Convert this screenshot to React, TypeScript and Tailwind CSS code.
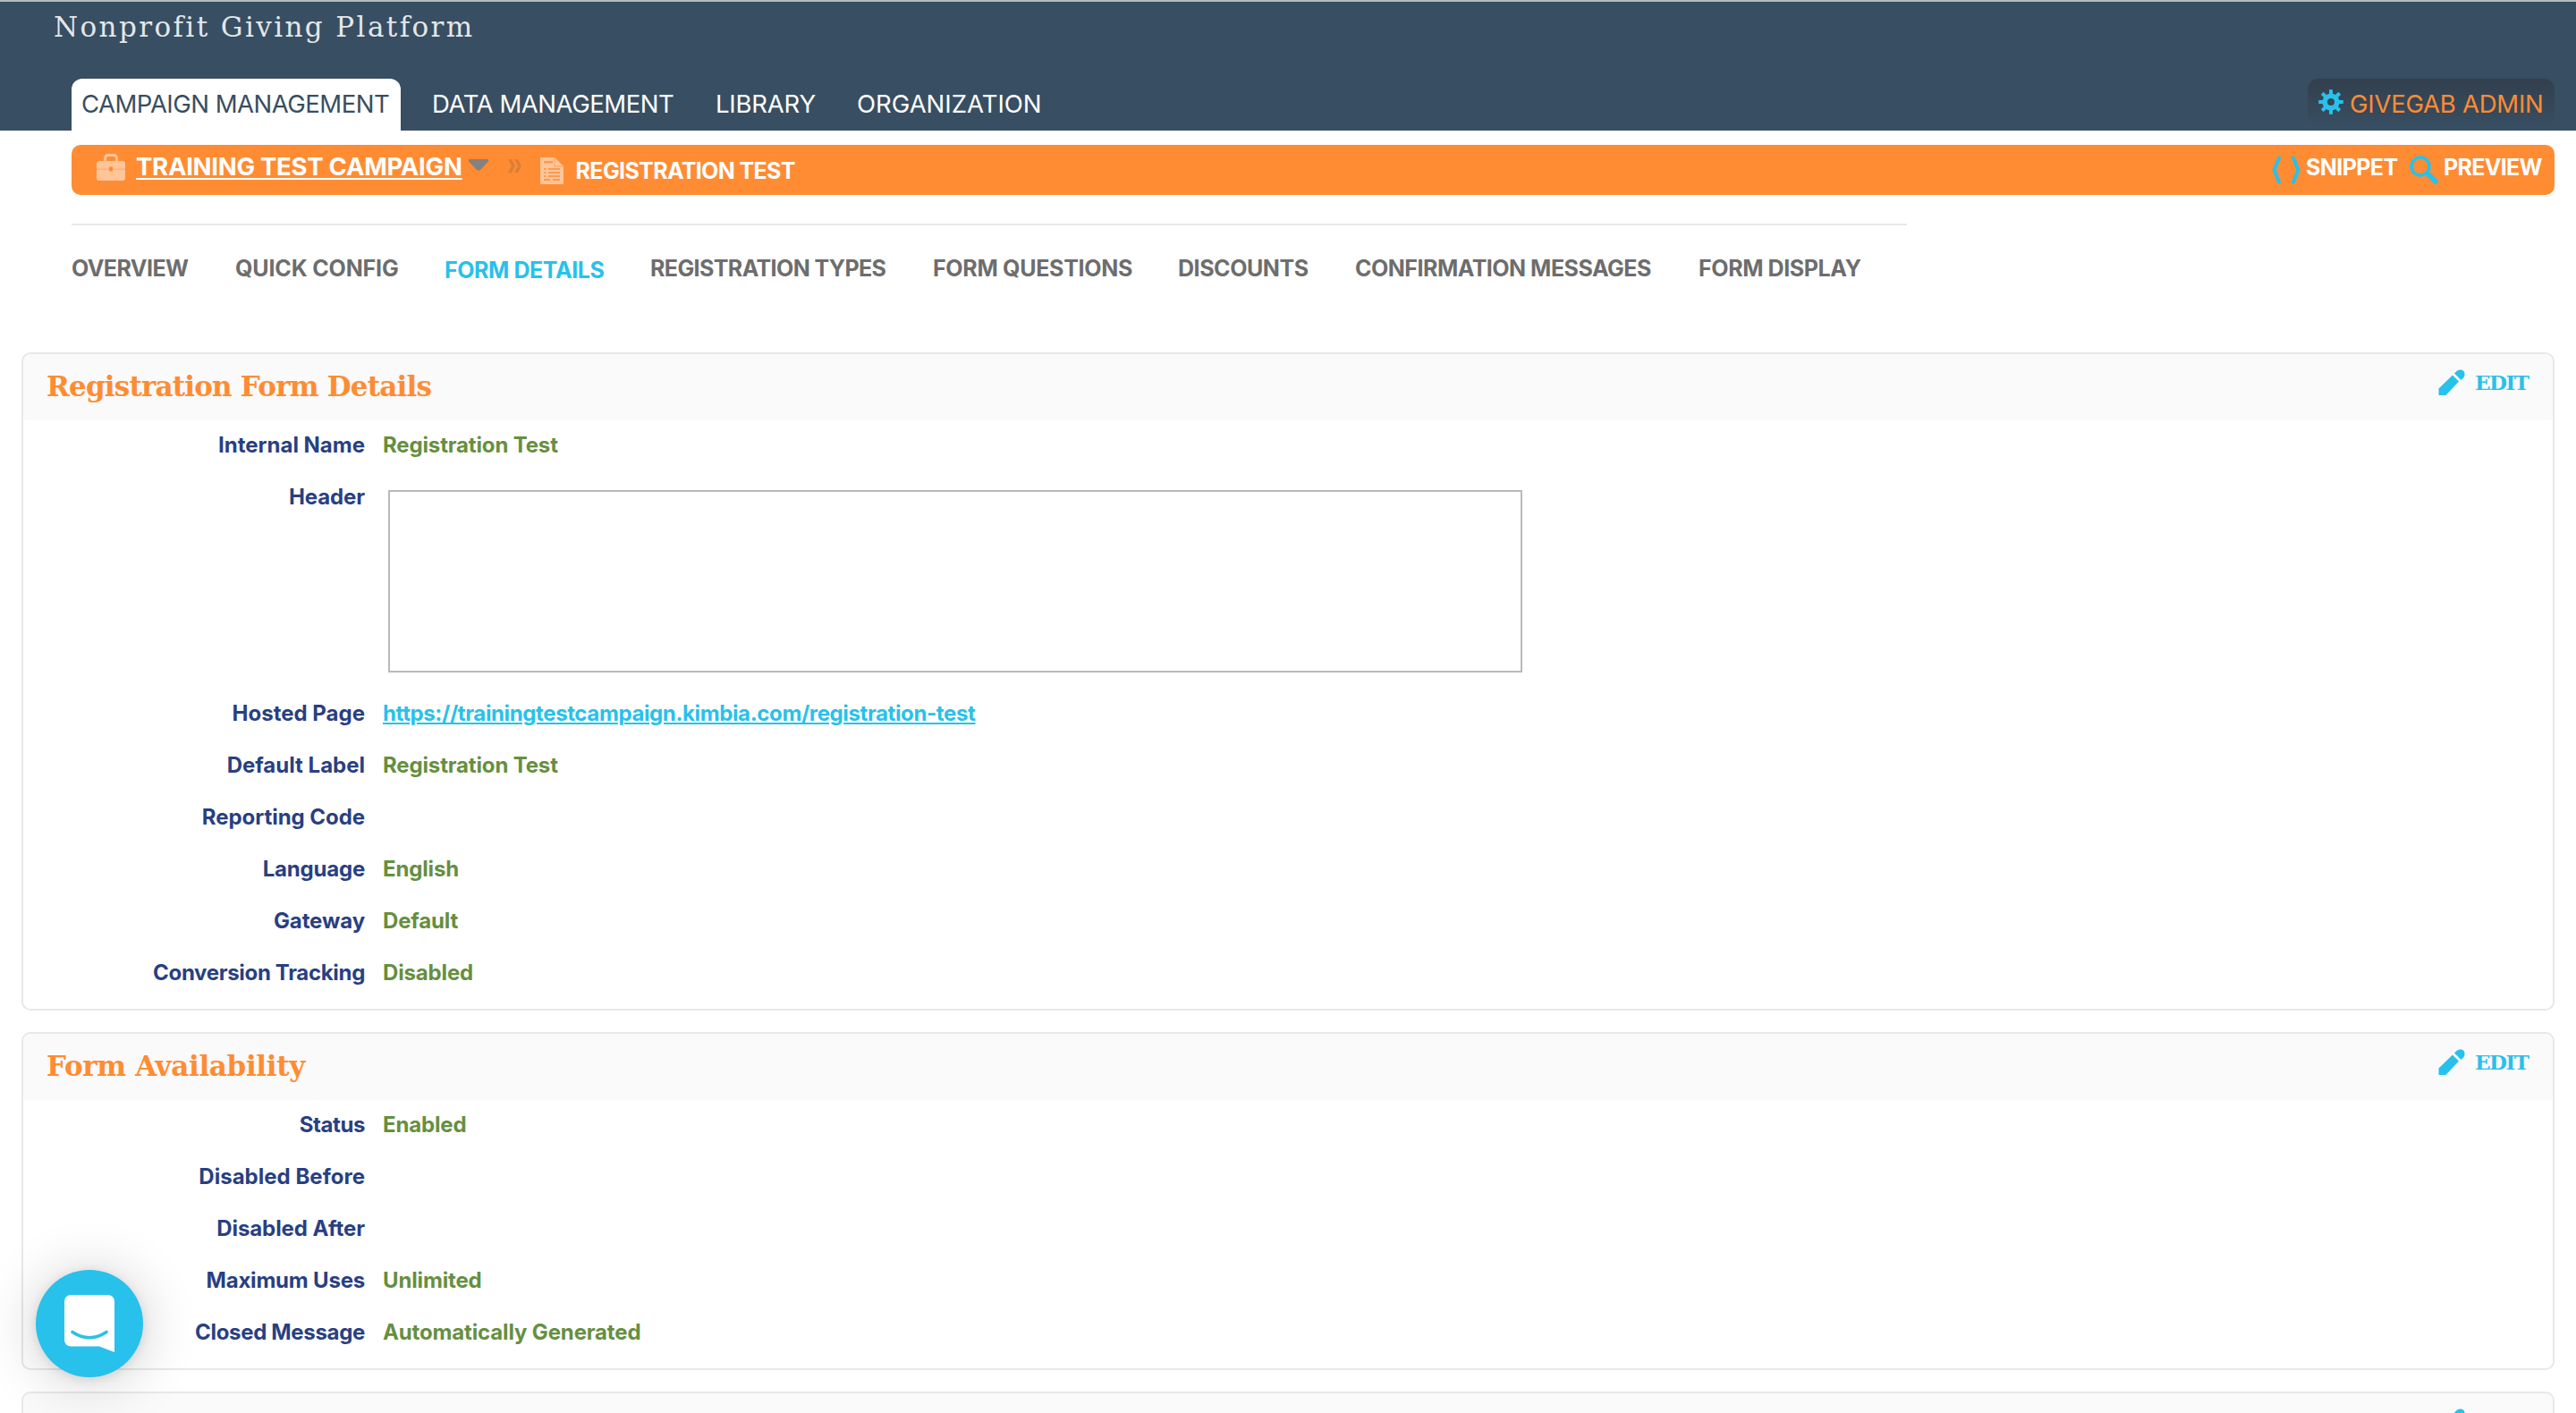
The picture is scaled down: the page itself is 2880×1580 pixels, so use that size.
import React from 'react';

type Row = { label: string; value?: string; labelCls?: string; box?: boolean; link?: boolean };

const NAV = [
  { label: 'OVERVIEW', cls: 'w-[183px] tracking-[-0.55px]' },
  { label: 'QUICK CONFIG', cls: 'w-[234px] tracking-[-0.15px]' },
  { label: 'FORM DETAILS', cls: 'w-[230px] tracking-[-0.42px] pt-[2px] text-[#28c1eb]' },
  { label: 'REGISTRATION TYPES', cls: 'w-[316px] tracking-[-0.6px]' },
  { label: 'FORM QUESTIONS', cls: 'w-[274px] tracking-[-0.3px]' },
  { label: 'DISCOUNTS', cls: 'w-[198px] tracking-[-0.45px]' },
  { label: 'CONFIRMATION MESSAGES', cls: 'w-[384px] tracking-[-0.5px]' },
  { label: 'FORM DISPLAY', cls: 'tracking-[-0.4px]' },
];

const DETAILS: Row[] = [
  { label: 'Internal Name', value: 'Registration Test', labelCls: 'tracking-[0px]' },
  { label: 'Header', box: true, labelCls: 'tracking-[-0.1px]' },
  {
    label: 'Hosted Page',
    value: 'https://trainingtestcampaign.kimbia.com/registration-test',
    link: true,
    labelCls: 'tracking-[0px]',
  },
  { label: 'Default Label', value: 'Registration Test', labelCls: 'tracking-[0px]' },
  { label: 'Reporting Code', labelCls: 'tracking-[-0.05px]' },
  { label: 'Language', value: 'English' },
  { label: 'Gateway', value: 'Default', labelCls: 'tracking-[-0.1px]' },
  { label: 'Conversion Tracking', value: 'Disabled', labelCls: 'tracking-[-0.32px]' },
];

const AVAILABILITY: Row[] = [
  { label: 'Status', value: 'Enabled', labelCls: 'tracking-[-0.4px]' },
  { label: 'Disabled Before', labelCls: 'tracking-[0.02px]' },
  { label: 'Disabled After', labelCls: 'tracking-[-0.08px]' },
  { label: 'Maximum Uses', value: 'Unlimited' },
  { label: 'Closed Message', value: 'Automatically Generated', labelCls: 'tracking-[-0.32px]' },
];

function Gear() {
  return (
    <svg className="h-[28px] w-[28px]" viewBox="-14 -14 28 28" fill="#28c1eb">
      {[0, 45, 90, 135].map((a) => (
        <rect key={a} x="-2" y="-13.8" width="4" height="27.6" transform={`rotate(${a})`} />
      ))}
      <circle r="6.8" fill="none" stroke="#28c1eb" strokeWidth="5.6" />
      <circle r="4" fill="#34465a" />
    </svg>
  );
}

function Briefcase() {
  return (
    <svg className="h-[30px] w-[32px]" viewBox="0 0 32 30" fill="#ffc599">
      <path d="M9.500 9V5a3.500 3.500 0 0 1 3.500-3.500h6A3.500 3.500 0 0 1 22.500 5v4" fill="none" stroke="#ffc599" strokeWidth="3" />
      <path d="M3 8h26a3 3 0 0 1 3 3v5.500H18v-2h-4v2H0V11a3 3 0 0 1 3-3z" />
      <path d="M0 18h14v1.500h4V18H32v9a3 3 0 0 1-3 3H3a3 3 0 0 1-3-3z" />
      <path d="M0 16h14v2H0zM18 16h14v2H18z" opacity=".65" />
    </svg>
  );
}

function FormDoc() {
  return (
    <svg className="h-[30px] w-[26px]" viewBox="0 0 26 30">
      <path d="M0 0h16l10 10v20H0z" fill="#ffc599" />
      <path d="M16 0v10h10" fill="none" stroke="#fdae75" strokeWidth="1.500" />
      <g fill="#fd9a4e">
        <rect x="4" y="4" width="10" height="2.500" />
        <rect x="4" y="12" width="2.500" height="2" />
        <rect x="9" y="12" width="13" height="2" />
        <rect x="4" y="16" width="2.500" height="2" />
        <rect x="9" y="16" width="13" height="2" />
        <rect x="4" y="20" width="2.500" height="2" />
        <rect x="9" y="20" width="13" height="2" />
        <rect x="4" y="24" width="7" height="2" />
        <rect x="14" y="24" width="8" height="2" />
      </g>
    </svg>
  );
}

function Pencil() {
  return (
    <svg className="h-[30px] w-[30px]" viewBox="0 0 30 30" fill="#28c1eb">
      <path d="M0.500 21.500L16 6.500l7 7L8.500 29H0.500z" />
      <path d="M18 4.500l2.500-2.500Q22 .5 24 .5h1.500Q29.500 1 29.500 5v1Q29.500 8 28 9.500L25.500 12z" />
    </svg>
  );
}

function PanelHead({ title, cls }: { title?: string; cls?: string }) {
  return (
    <div className="flex h-[74px] items-start justify-between rounded-t-[9px] bg-[#fafafa] pr-[27px] pl-[26px]">
      <h2 className={`font-['DejaVu_Serif',serif] text-[31px] leading-[73px] font-bold text-[#ff8c33] ${cls ?? ''}`}>{title}</h2>
      <a className="flex h-[63px] items-center">
        <span className="mt-[1px]">
          <Pencil />
        </span>
        <span className="w-[71px] pl-[11px] font-['DejaVu_Serif',serif] text-[23px] leading-[62px] font-bold tracking-[-1.5px] text-[#28c1eb]">
          {title && 'EDIT'}
        </span>
      </a>
    </div>
  );
}

function Rows({ rows }: { rows: Row[] }) {
  return (
    <div className="pb-[10px] text-[24px] leading-[56px] font-bold">
      {rows.map((r) => (
        <div key={r.label} className={r.box ? 'flex h-[242px]' : 'flex h-[58px]'}>
          <div className={`w-[382px] text-right text-[#293f82] ${r.labelCls ?? 'tracking-[-0.2px]'}`}>{r.label}</div>
          {r.box && <div className="mt-[20px] ml-[26px] h-[204px] w-[1268px] border-2 border-[#b9b9b9]" />}
          {r.value && !r.link && <div className="ml-[20px] tracking-[-0.15px] text-[#668f3f]">{r.value}</div>}
          {r.link && (
            <a className="ml-[20px] tracking-[-0.38px] text-[#28c1eb] underline decoration-2 underline-offset-[2px]">{r.value}</a>
          )}
        </div>
      ))}
    </div>
  );
}

export default function App() {
  return (
    <div className="relative h-[1580px] w-[2880px] overflow-hidden bg-white font-['Inter',sans-serif]">
      <header className="flex h-[146px] flex-col justify-between border-t-2 border-[#b4bbbf] bg-[#384e62]">
        <div className="pl-[60px] font-['DejaVu_Serif',serif] text-[31px] leading-[57px] tracking-[2.4px] text-[#e3e7ea]">
          Nonprofit Giving Platform
        </div>
        <div className="flex h-[58px] justify-between pr-[24px] pl-[80px] text-[27.5px] leading-[57px] text-white">
          <nav className="flex">
            <a className="w-[368px] rounded-t-[12px] bg-white pl-[11px] tracking-[-0.5px] text-[#384e62]">CAMPAIGN MANAGEMENT</a>
            <a className="ml-[35px] w-[317px] tracking-[-0.45px]">DATA MANAGEMENT</a>
            <a className="w-[158px] tracking-[-0.2px]">LIBRARY</a>
            <a className="tracking-[0px]">ORGANIZATION</a>
          </nav>
          <a className="flex w-[276px] rounded-t-[12px] bg-linear-to-b from-[#323f4d] to-[#384e62] to-90% pl-[12px] tracking-[-0.25px] text-[#ff8c33]">
            <span className="mt-[12px] mr-[7px]">
              <Gear />
            </span>
            GIVEGAB ADMIN
          </a>
        </div>
      </header>

      <div className="mt-[16px] mr-[24px] ml-[80px] flex h-[56px] justify-between rounded-[10px] bg-[#ff8c33] pl-[28px] font-bold text-white">
        <div className="flex">
          <span className="mt-[10px]">
            <Briefcase />
          </span>
          <a className="ml-[12px] text-[27.5px] leading-[48px] tracking-[-0.27px] underline decoration-2 underline-offset-[3px]">TRAINING TEST CAMPAIGN</a>
          <svg className="mt-[16px] ml-[7px] h-[13px] w-[22px]" viewBox="0 0 22 13">
            <path d="M0 0h22v2.500L12.500 12.500h-3L0 2.500z" fill="#83827f" />
          </svg>
          <svg className="mt-[16px] ml-[22px] h-[15px] w-[15px]" viewBox="0 0 15 15">
            <path d="M0 0h4l4 7.500-4 7.500H0l4-7.500zM7 0h4l4 7.500-4 7.500H7l4-7.500z" fill="#db7f38" />
          </svg>
          <span className="mt-[14px] ml-[21px]">
            <FormDoc />
          </span>
          <span className="ml-[14px] text-[25px] leading-[58px] tracking-[-0.65px]">REGISTRATION TEST</span>
        </div>
        <div className="flex text-[25px] leading-[50px]">
          <svg className="mt-[12px] h-[32px] w-[32px]" viewBox="0 0 32 32" fill="none" stroke="#28c1eb" strokeWidth="4" strokeLinecap="round" strokeLinejoin="round">
            <path d="M8 2.500L2.500 16 8 29.500M24 2.500L29.500 16 24 29.500" />
          </svg>
          <span className="ml-[6px] w-[116px] tracking-[-0.6px]">SNIPPET</span>
          <svg className="mt-[12px] h-[32px] w-[32px]" viewBox="0 0 32 32" fill="none" stroke="#28c1eb" strokeLinecap="round">
            <circle cx="12" cy="12" r="10" strokeWidth="3.500" />
            <path d="M19 19l3 3" strokeWidth="4" />
            <path d="M22 22l7 7" strokeWidth="6" />
          </svg>
          <span className="ml-[6px] w-[124px] tracking-[-0.7px]">PREVIEW</span>
        </div>
      </div>

      <nav className="mt-[32px] ml-[80px] flex h-[144px] w-[2052px] border-t-2 border-[#e8e8e8] text-[25px] leading-[96px] font-bold whitespace-nowrap text-[#6d6d6d]">
        {NAV.map((n) => (
          <a key={n.label} className={`shrink-0 ${n.cls}`}>
            {n.label}
          </a>
        ))}
      </nav>

      <main className="mr-[24px] ml-[24px] flex flex-col gap-[24px]">
        <section className="rounded-[10px] border-2 border-[#e8e8e8]">
          <PanelHead title="Registration Form Details" cls="tracking-[-0.8px]" />
          <Rows rows={DETAILS} />
        </section>
        <section className="rounded-[10px] border-2 border-[#e8e8e8]">
          <PanelHead title="Form Availability" cls="tracking-[-0.35px]" />
          <Rows rows={AVAILABILITY} />
        </section>
        <section className="rounded-t-[10px] border-2 border-b-0 border-[#e8e8e8]">
          <PanelHead />
        </section>
      </main>

      <button className="absolute top-[1420px] left-[40px] flex h-[120px] w-[120px] items-center justify-center rounded-full bg-[#28c1eb] shadow-[0_2px_12px_rgba(0,0,0,0.1),0_4px_64px_rgba(0,0,0,0.2)]">
        <svg className="h-[64px] w-[56px]" viewBox="0 0 56 64">
          <path d="M7 0h42a7 7 0 0 1 7 7v57L39 57.500H7a7 7 0 0 1-7-7V7a7 7 0 0 1 7-7z" fill="#fff" />
          <path d="M9 41.500Q28 54 47 41.500" fill="none" stroke="#28c1eb" strokeWidth="3.600" strokeLinecap="round" />
        </svg>
      </button>
    </div>
  );
}
